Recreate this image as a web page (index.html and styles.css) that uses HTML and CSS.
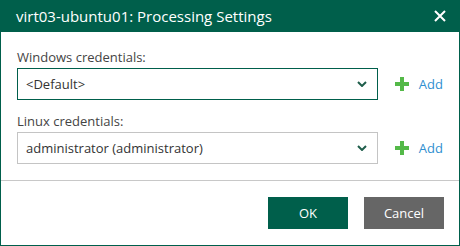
FILE: index.html
```html
<!DOCTYPE html>
<html>
<head>
<meta charset="utf-8">
<link rel="stylesheet" href="styles.css">
</head>
<body>
<div class="dialog">
  <div class="header">
    <span class="title">virt03-ubuntu01: Processing Settings</span>
    <svg class="close" width="12" height="12" viewBox="0 0 12 12"><path d="M1 1L11 11M11 1L1 11" stroke="#fff" stroke-width="2" fill="none"/></svg>
  </div>
  <div class="body">
    <div class="label">Windows credentials:</div>
    <div class="row">
      <div class="select active">
        <span>&lt;Default&gt;</span>
        <svg class="chev" width="10" height="6" viewBox="0 0 10 6"><path d="M1 1L5 5L9 1" stroke="#1f5e4b" stroke-width="2" fill="none"/></svg>
      </div>
      <div class="add">
        <svg class="plus" width="14" height="14" viewBox="0 0 14 14"><path d="M5 0h4v5h5v4h-5v5h-4v-5h-5v-4h5z" fill="#54b948"/></svg>
        <span>Add</span>
      </div>
    </div>
    <div class="label second">Linux credentials:</div>
    <div class="row">
      <div class="select">
        <span>administrator (administrator)</span>
        <svg class="chev" width="10" height="6" viewBox="0 0 10 6"><path d="M1 1L5 5L9 1" stroke="#1f5e4b" stroke-width="2" fill="none"/></svg>
      </div>
      <div class="add">
        <svg class="plus" width="14" height="14" viewBox="0 0 14 14"><path d="M5 0h4v5h5v4h-5v5h-4v-5h-5v-4h5z" fill="#54b948"/></svg>
        <span>Add</span>
      </div>
    </div>
  </div>
  <div class="footer">
    <button class="btn ok">OK</button>
    <button class="btn cancel">Cancel</button>
  </div>
</div>
</body>
</html>
```
FILE: styles.css
```css
html, body {
  margin: 0;
  padding: 0;
  background: #fff;
}
body {
  font-family: "Open Sans", "Noto Sans", sans-serif;
  color: #444;
}
.dialog {
  width: 460px;
  height: 246px;
  box-sizing: border-box;
  border: 1px solid #005f4b;
  border-top: none;
  display: flex;
  flex-direction: column;
}
.header {
  height: 32px;
  background: #005f4b;
  margin: 0 -1px;
  padding: 0 14px 0 16px;
  display: flex;
  align-items: center;
  justify-content: space-between;
}
.title {
  color: #fff;
  font-size: 15px;
  line-height: 20px;
}
.close {
  display: block;
}
.body {
  padding: 16px 16px 16px 16px;
  flex: 1;
}
.label {
  font-size: 13px;
  line-height: 18px;
  color: #444;
  margin-bottom: 2px;
}
.label.second {
  margin-top: 12px;
}
.row {
  display: flex;
  align-items: center;
}
.select {
  width: 361px;
  height: 32px;
  box-sizing: border-box;
  border: 1px solid #c4c4c4;
  padding: 0 10px 0 8px;
  display: flex;
  align-items: center;
  justify-content: space-between;
  font-size: 13px;
  color: #333;
}
.select.active {
  border-color: #005f4b;
}
.chev {
  display: block;
}
.add {
  display: flex;
  align-items: center;
  margin-left: 17px;
  font-size: 13px;
  color: #2f8fd0;
}
.plus {
  display: block;
  margin-right: 10px;
}
.footer {
  border-top: 1px solid #c8c8c8;
  padding: 16px 15px 16px 0;
  display: flex;
  justify-content: flex-end;
  gap: 16px;
}
.btn {
  width: 80px;
  height: 32px;
  border: none;
  font-family: "Open Sans", "Noto Sans", sans-serif;
  font-size: 13px;
  color: #fff;
  padding: 0;
}
.ok {
  background: #005f4b;
}
.cancel {
  background: #666666;
}
```
